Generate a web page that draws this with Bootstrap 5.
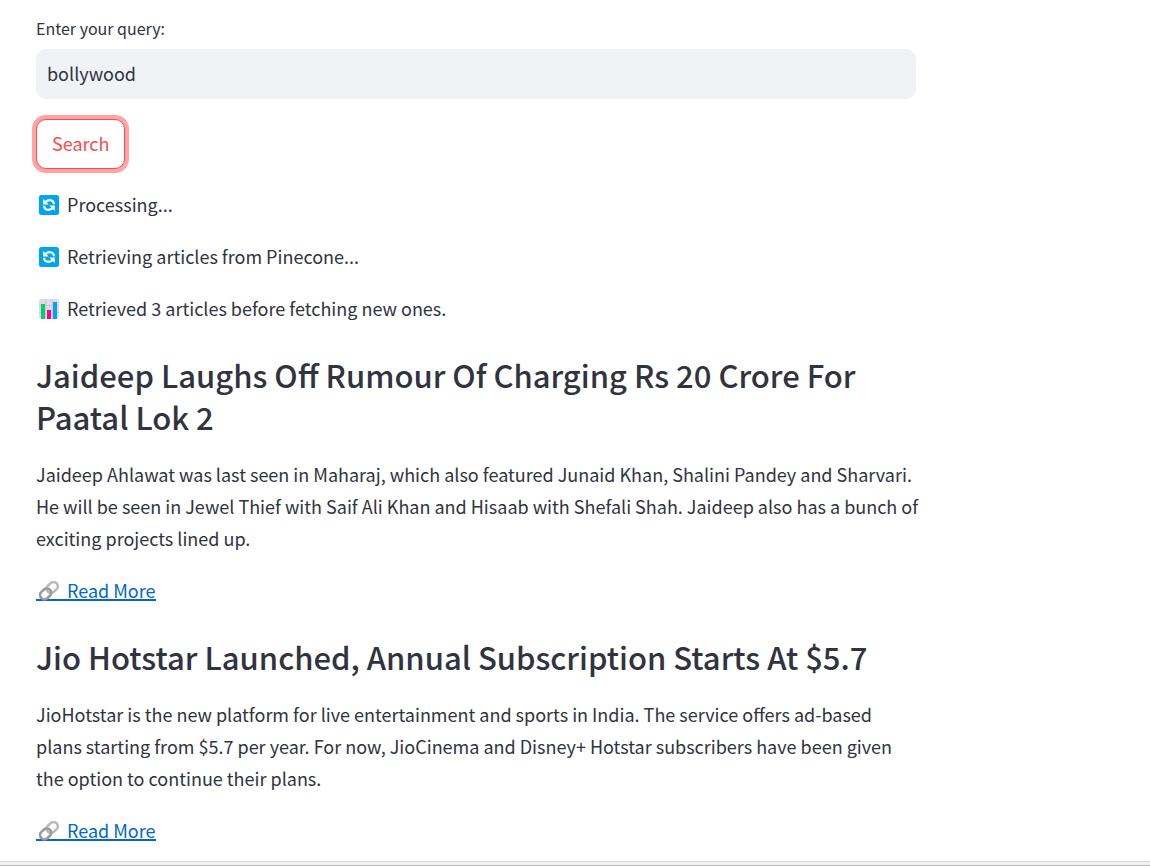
<!DOCTYPE html>
<html lang="en">
<head>
<meta charset="utf-8">
<meta name="viewport" content="width=device-width, initial-scale=1">
<title>News search</title>
<link href="https://cdn.jsdelivr.net/npm/bootstrap@5.3.0/dist/css/bootstrap.min.css" rel="stylesheet">
<style>
body{font-family:"Noto Sans CJK SC",sans-serif;font-size:18px;line-height:32px;color:#31333f;background:#fff}
.page-col{max-width:952px;padding:15px 36px}
.query-form{margin-bottom:19px}
.query-label{font-size:16px;line-height:26px;margin-bottom:8px}
.query-box,.query-box:focus{font-size:18px;line-height:30px;padding:9px 11px 11px;background:#f0f2f6;border:0;border-radius:10px;color:#31333f;box-shadow:none}
.btn-search,.btn-search:hover{margin-top:20px;font-size:18px;line-height:32px;padding:7px 15px 9px;border:1px solid #ff4b4b;border-radius:10px;color:#ff4b4b;background:#fff;box-shadow:0 0 0 4px rgba(255,75,75,.5)}
.page-col p{margin-bottom:20px}
.status-line{padding-left:3px}
.emoji{width:20px;height:20px;flex:none}
.status-line,.read-more{gap:8px}
.status-line .emoji{margin-top:2px}
article{margin-right:-4px}
.headline{font-size:31px;line-height:42px;font-weight:500;margin:30px 0 20px}
.read-more{padding-left:3px;margin:7px 0 5px;line-height:18px;color:#0068c9;text-decoration:none;border-bottom:2px solid #0068c9}
.read-more .emoji{margin-bottom:-2px}
.bottom-edge{height:5px;background:#f2f2f2;border-top:1px solid #d9d9d9;border-bottom:1px solid #b9b9b9}
</style>
</head>
<body>
<svg class="d-none" aria-hidden="true">
<symbol id="refresh" viewBox="0 0 20 20">
<rect width="20" height="20" rx="2.5" fill="#00a6ed"/>
<g fill="none" stroke="#fff" stroke-width="2.2"><path d="M15 9.200C14.700 4.600 9 3.800 6 7.500M5 10.800c.3 4.600 6 5.400 9 1.700"/></g>
<path d="M4.200 4v5.500h5.500zM15.800 16v-5.500h-5.500z" fill="#fff"/>
</symbol>
<symbol id="chart" viewBox="0 0 20 20">
<rect width="20" height="20" rx="2.5" fill="#e1d8ec"/>
<path d="M0 6.500h20M0 13.500h20M6.700 0v20M13.300 0v20" stroke="#cdc4d6" stroke-width="1"/>
<path d="M2 5h4v15H2z" fill="#00d26a"/><path d="M8 11h4v9H8z" fill="#fc0290"/><path d="M14 3h4v17h-4z" fill="#00a6ed"/>
</symbol>
<symbol id="chain" viewBox="0 0 20 20">
<g fill="none" stroke-width="2.6"><rect x="-6" y="-4.300" width="12" height="8.600" rx="4.300" transform="translate(13.200 6.500) rotate(-42)" stroke="#bbb"/><rect x="-6" y="-4.300" width="12" height="8.600" rx="4.300" transform="translate(6.600 12.900) rotate(-42)" stroke="#999"/></g>
</symbol>
</svg>
<main class="page-col">
<form class="query-form">
<label class="query-label d-block" for="query">Enter your query:</label>
<input id="query" class="form-control query-box" type="text" value="bollywood">
<button class="btn btn-search d-block" type="button">Search</button>
</form>
<p class="status-line d-flex align-items-center"><svg class="emoji"><use href="#refresh"/></svg>Processing...</p>
<p class="status-line d-flex align-items-center"><svg class="emoji"><use href="#refresh"/></svg>Retrieving articles from Pinecone...</p>
<p class="status-line d-flex align-items-center"><svg class="emoji"><use href="#chart"/></svg>Retrieved 3 articles before fetching new ones.</p>
<article>
<h2 class="headline">Jaideep Laughs Off Rumour Of Charging Rs 20 Crore For Paatal Lok 2</h2>
<p>Jaideep Ahlawat was last seen in Maharaj, which also featured Junaid Khan, Shalini Pandey and Sharvari. He will be seen in Jewel Thief with Saif Ali Khan and Hisaab with Shefali Shah. Jaideep also has a bunch of exciting projects lined up.</p>
<div class="d-flex"><a class="read-more d-flex align-items-center" href="#"><svg class="emoji"><use href="#chain"/></svg>Read More</a></div>
</article>
<article>
<h2 class="headline">Jio Hotstar Launched, Annual Subscription Starts At $5.7</h2>
<p>JioHotstar is the new platform for live entertainment and sports in India. The service offers ad-based plans starting from $5.7 per year. For now, JioCinema and Disney+ Hotstar subscribers have been given the option to continue their plans.</p>
<div class="d-flex"><a class="read-more d-flex align-items-center" href="#"><svg class="emoji"><use href="#chain"/></svg>Read More</a></div>
</article>
</main>
<div class="bottom-edge"></div>
</body>
</html>
